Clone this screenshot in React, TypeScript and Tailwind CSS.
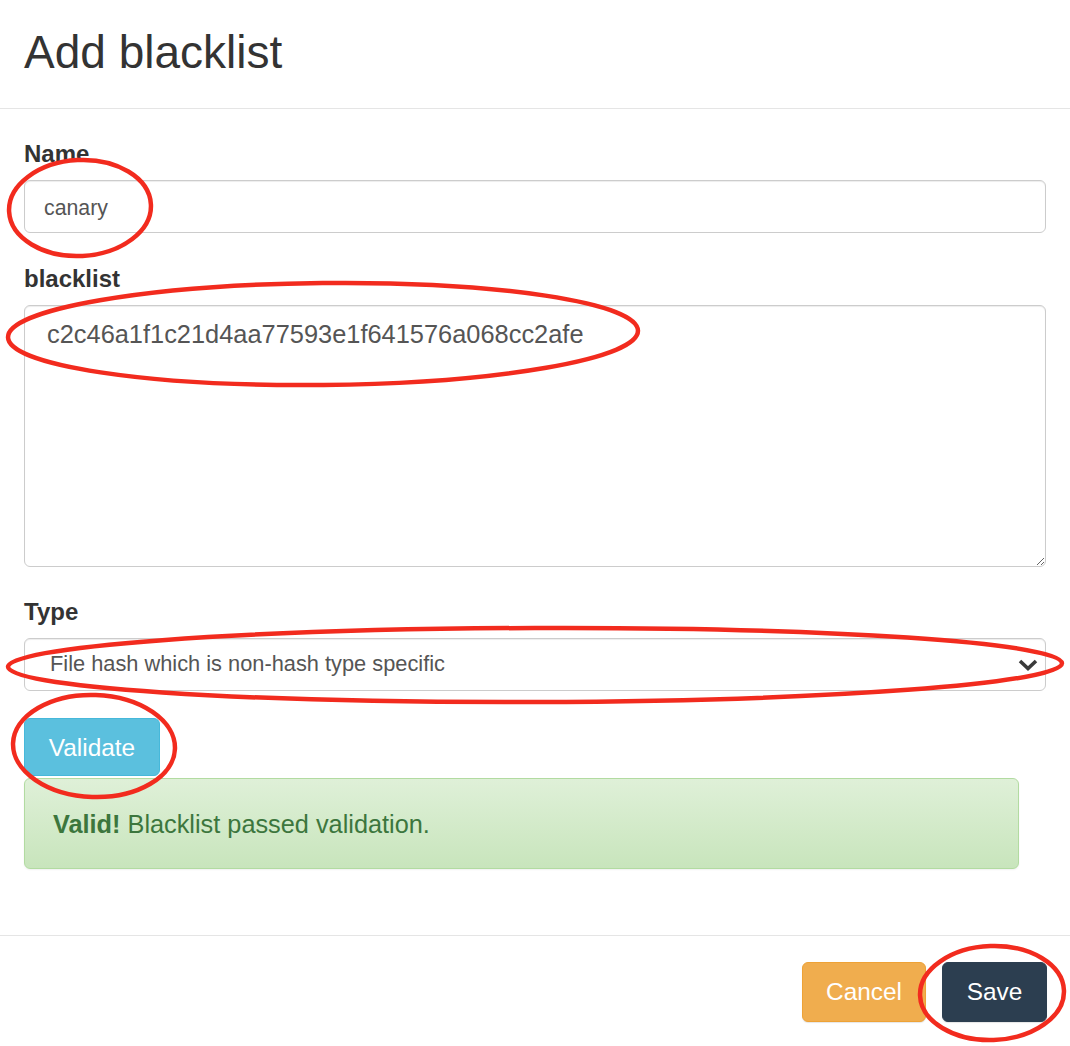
const marks = [
  { cx: 80, cy: 208, rx: 71, ry: 48, rot: -3 },
  { cx: 323, cy: 334, rx: 315, ry: 51, rot: -0.6 },
  { cx: 535, cy: 665, rx: 527, ry: 37, rot: -0.2 },
  { cx: 94, cy: 746, rx: 81, ry: 51, rot: 2 },
  { cx: 992, cy: 993, rx: 72, ry: 47, rot: -2 },
];

type FieldLabelProps = {
  text: string;
};

const FieldLabel = ({ text }: FieldLabelProps) => (
  <label className="block h-[30px] leading-[30px] text-[24px] font-bold text-[#333] mb-[11px]">
    {text}
  </label>
);

export default function App() {
  return (
    <div className="relative w-[1070px] h-[1046px] bg-white overflow-hidden font-['Liberation_Sans',Arial,sans-serif] text-[#333]">
      <div className="h-[109px] border-b border-[#e5e5e5] flex items-center px-6 pb-[4px]">
        <h4 className="text-[46px] leading-none font-normal">Add blacklist</h4>
      </div>

      <div className="h-[826px] px-6 pt-[30px]">
        <FieldLabel text="Name" />
        <input
          defaultValue="canary"
          className="block w-[1022px] h-[53px] px-[19px] pt-[3px] text-[21.3px] text-[#555] bg-white border border-[#ccc] rounded-[6px] shadow-[inset_0_1px_1px_rgba(0,0,0,0.075)] outline-none"
        />

        <div className="mt-[31px]">
          <FieldLabel text="blacklist" />
          <textarea
            defaultValue="c2c46a1f1c21d4aa77593e1f641576a068cc2afe"
            className="block w-[1022px] h-[262px] pl-[22px] pt-[10px] text-[25.4px] leading-[36px] text-[#555] bg-white border border-[#ccc] rounded-[6px] shadow-[inset_0_1px_1px_rgba(0,0,0,0.075)] outline-none"
          />
        </div>

        <div className="mt-[30px]">
          <FieldLabel text="Type" />
          <div className="relative w-[1022px]">
            <select className="block w-full h-[53px] pl-[25px] pr-12 appearance-none text-[21.8px] text-[#555] bg-white border border-[#ccc] rounded-[6px] shadow-[inset_0_1px_1px_rgba(0,0,0,0.075)] outline-none">
              <option>File hash which is non-hash type specific</option>
            </select>
            <svg
              className="absolute right-[8px] top-[21px] pointer-events-none"
              width="20"
              height="12"
              viewBox="0 0 20 12"
            >
              <path d="M2 2 L10 9.5 L18 2" fill="none" stroke="#3a3a3a" strokeWidth="3.6" />
            </svg>
          </div>
        </div>

        <button className="mt-[27px] block w-[136px] h-[58px] pt-[3px] text-[24.4px] text-white bg-[#5bc0de] border border-[#46b8da] rounded-[6px]">
          Validate
        </button>

        <div className="mt-[2px] w-[995px] h-[91px] flex items-center pl-[28px] pt-[2px] text-[25.3px] text-[#3c763d] bg-gradient-to-b from-[#dff0d8] to-[#c8e5bc] border border-[#b2dba1] rounded-[6px] shadow-[0_1px_2px_rgba(0,0,0,0.06)]">
          <span>
            <strong className="font-bold">Valid!</strong> Blacklist passed validation.
          </span>
        </div>
      </div>

      <div className="border-t border-[#e5e5e5] flex justify-end gap-4 pt-[26px] pr-[23px]">
        <button className="w-[124px] h-[60px] text-[24.4px] text-white bg-[#f0ad4e] border border-[#eea236] rounded-[6px] shadow-[0_1px_1px_rgba(0,0,0,0.1)]">
          Cancel
        </button>
        <button className="w-[105px] h-[60px] text-[24.4px] text-white bg-[#2c3e50] border border-[#2c3e50] rounded-[6px] shadow-[0_1px_1px_rgba(0,0,0,0.1)]">
          Save
        </button>
      </div>

      <svg
        className="absolute left-0 top-0 pointer-events-none"
        width="1070"
        height="1046"
        viewBox="0 0 1070 1046"
      >
        {marks.map((m, i) => (
          <ellipse
            key={i}
            cx={m.cx}
            cy={m.cy}
            rx={m.rx}
            ry={m.ry}
            fill="none"
            stroke="#f22b1e"
            strokeWidth="4.5"
            transform={`rotate(${m.rot} ${m.cx} ${m.cy})`}
          />
        ))}
      </svg>
    </div>
  );
}
